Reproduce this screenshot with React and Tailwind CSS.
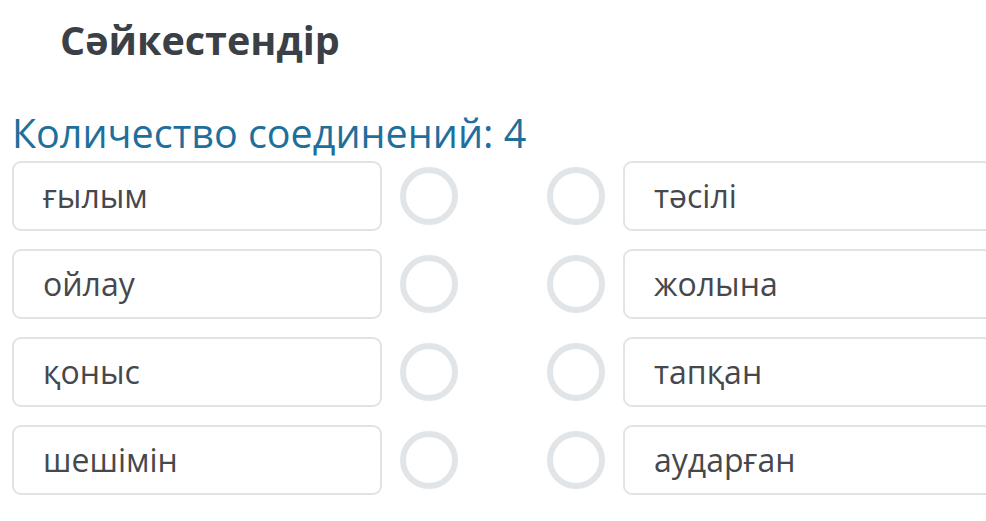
const LEFT = ['ғылым', 'ойлау', 'қоныс', 'шешімін'];
const RIGHT = ['тәсілі', 'жолына', 'тапқан', 'аударған'];

const Dot = () => (
  <div className="w-[58px] h-[58px] shrink-0 rounded-full border-[6px] border-[#e2e5e8] bg-white" />
);

const Item = ({ text }) => (
  <div className="w-[370px] h-[70px] shrink-0 flex items-center pl-[29px] rounded-[9px] border-2 border-[#e3e3e3] bg-white text-[32px] text-[#45484c]">
    {text}
  </div>
);

export default function App() {
  return (
    <div className="w-[986px] h-[521px] overflow-hidden bg-white font-['Open_Sans',sans-serif]">
      <h1 className="pl-[60px] pt-[12px] text-[39.5px] leading-[56px] font-bold text-[#3b4047]">
        Сәйкестендір
      </h1>
      <p className="pl-[12px] mt-[43px] text-[39.5px] leading-[44px] text-[#1f6f9c]">
        Количество соединений: 4
      </p>
      <div className="mt-[6px] pl-[12px] flex flex-col gap-[18px]">
        {LEFT.map((l, i) => (
          <div key={i} className="flex items-center">
            <Item text={l} />
            <div className="ml-[18px]"><Dot /></div>
            <div className="ml-[89px]"><Dot /></div>
            <div className="ml-[18px]"><Item text={RIGHT[i]} /></div>
          </div>
        ))}
      </div>
    </div>
  );
}
